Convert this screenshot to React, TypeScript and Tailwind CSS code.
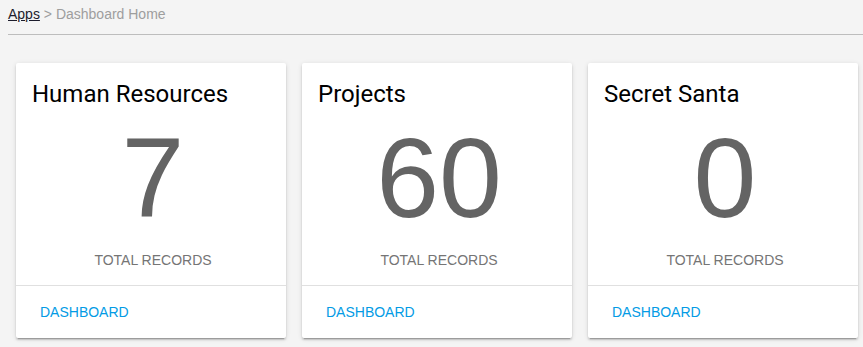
import React from "react";

const apps = [
  { name: "Human Resources", count: 7 },
  { name: "Projects", count: 60 },
  { name: "Secret Santa", count: 0 },
];

function AppCard({ name, count }: { name: string; count: number }) {
  return (
    <div className="flex w-[270px] shrink-0 flex-col rounded-[2px] bg-white shadow-[0_2px_2px_0_rgba(0,0,0,0.14),0_3px_1px_-2px_rgba(0,0,0,0.2),0_1px_5px_0_rgba(0,0,0,0.12)]">
      <h2 className="px-4 pt-[19px] font-['Roboto',sans-serif] text-[24px] leading-[24px] font-normal text-black">
        {name}
      </h2>
      <div className="mt-[14px] pl-1 text-center text-[113px] leading-[116px] text-[#646464]">
        {count}
      </div>
      <div className="mt-[14px] pb-[15px] pl-1 text-center text-sm leading-5 text-[#757575]">
        TOTAL RECORDS
      </div>
      <div className="border-t border-[#e0e0e0] p-2">
        <a
          href="#"
          className="flex h-9 items-center px-4 text-sm text-[#039be5]"
        >
          DASHBOARD
        </a>
      </div>
    </div>
  );
}

export default function App() {
  return (
    <div className="min-h-[347px] bg-[#f4f4f4] font-['Liberation_Sans',Arial,sans-serif]">
      <div className="ml-2 border-b border-[#bdbdbd] pt-1 pb-[10px] text-sm leading-5">
        <a href="#" className="text-[#1c1c2c] underline">
          Apps
        </a>
        <span className="text-[#9e9e9e]"> &gt; Dashboard Home</span>
      </div>
      <div className="flex gap-4 pt-[28px] pl-4">
        {apps.map((app) => (
          <AppCard key={app.name} name={app.name} count={app.count} />
        ))}
      </div>
    </div>
  );
}
